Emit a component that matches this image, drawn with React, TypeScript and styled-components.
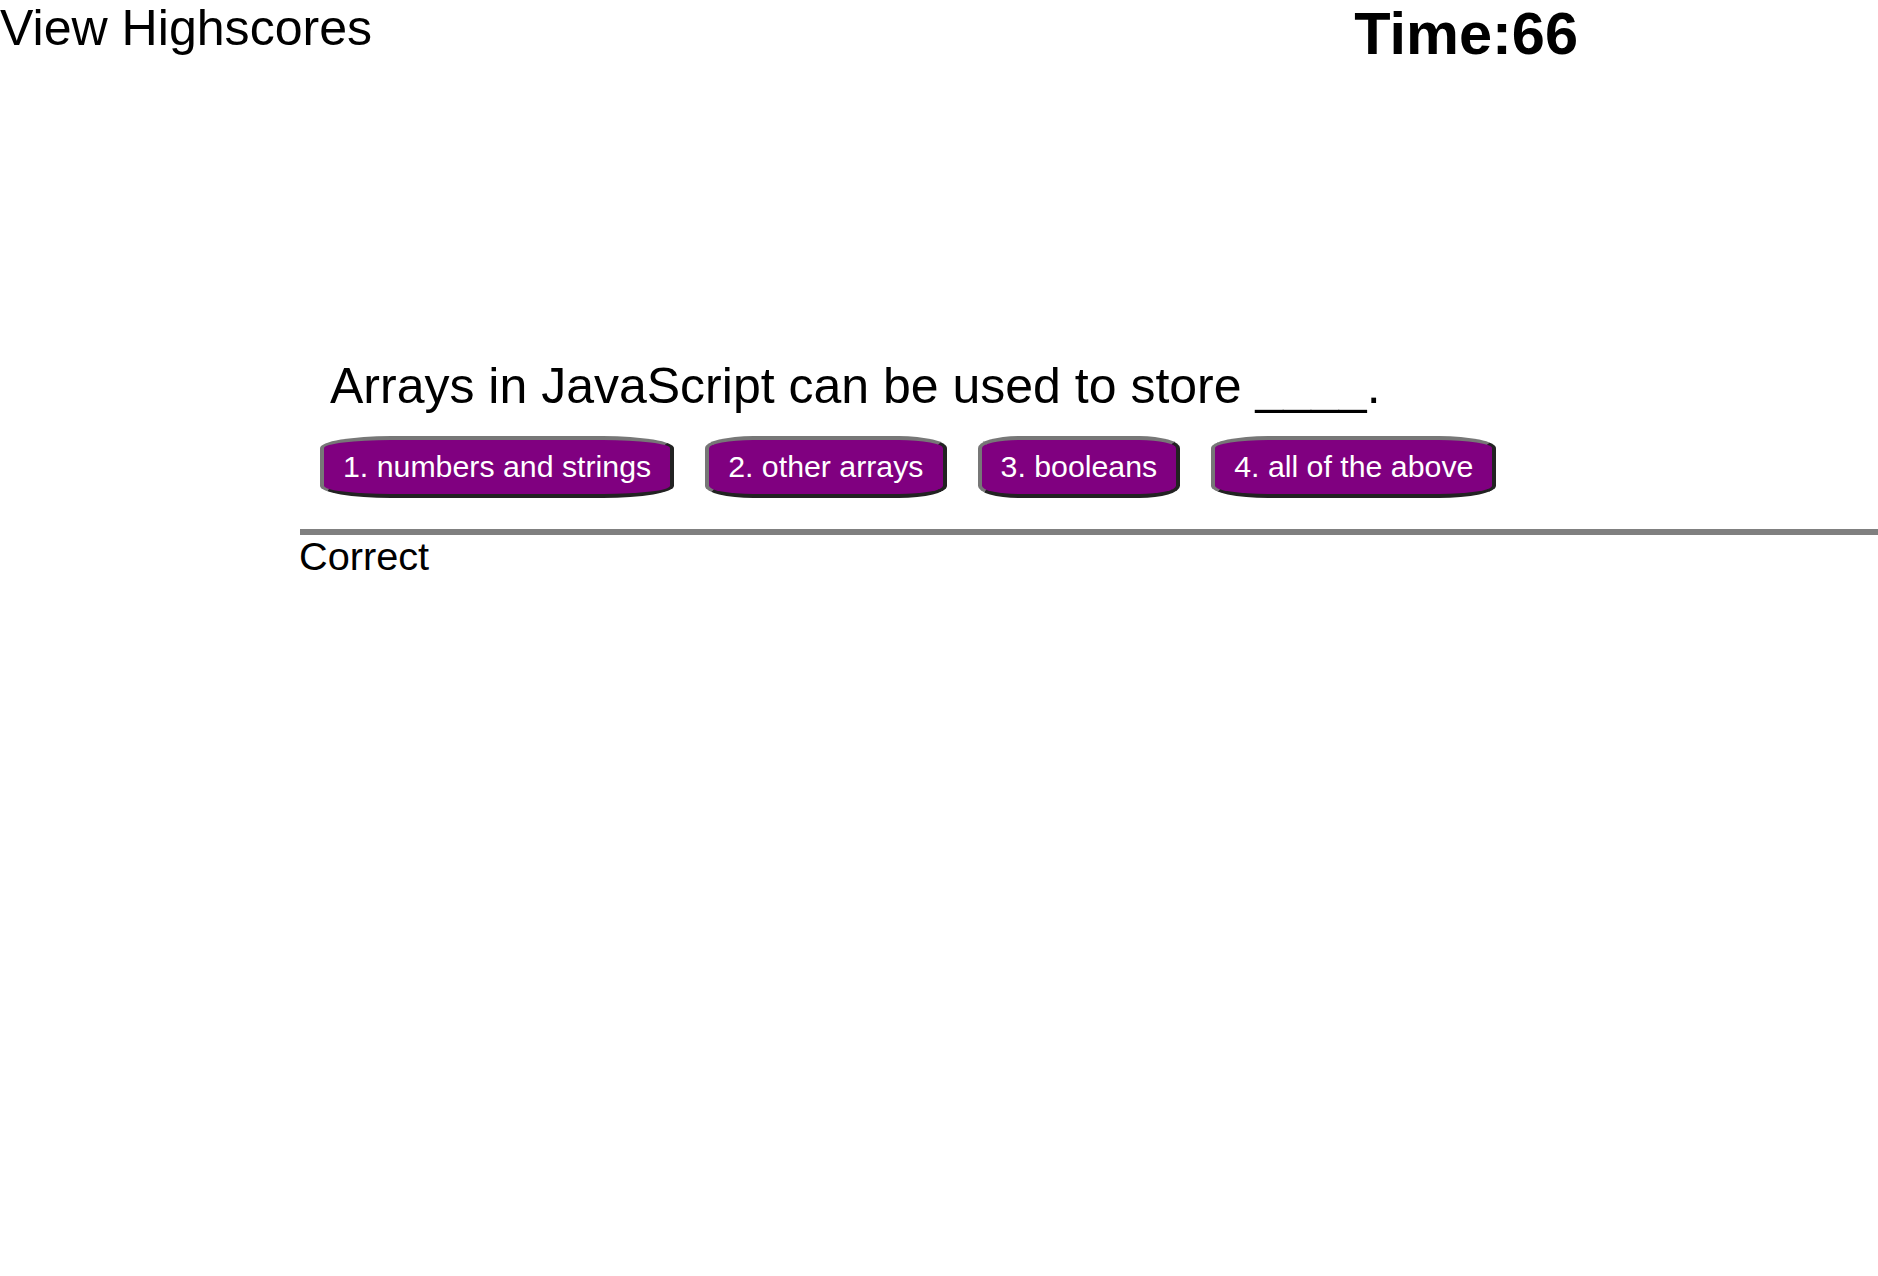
import styled, { createGlobalStyle } from 'styled-components'

const GLOBAL = createGlobalStyle`
    html, body {
        margin: 0;
        padding: 0;
        background: white;
        font-family: "Liberation Sans", Arial, Helvetica, sans-serif;
        color: black;
    }
`

const HEADER = styled.header`
    display: flex;
    justify-content: space-between;
    align-items: flex-start;
    padding-right: 300px;
`

const HIGHSCORES_LINK = styled.a`
    font-size: 50.1px;
    line-height: 1.1;
    margin-top: 1px;
    color: black;
    text-decoration: none;
    cursor: pointer;
`

const TIMER = styled.div`
    font-size: 59.5px;
    font-weight: bold;
    line-height: 1.15;
`

const QUIZ = styled.main`
    margin-top: 290px;
    padding-left: 300px;
`

const QUESTION = styled.h2`
    margin: 0 0 21px 30px;
    font-size: 50px;
    font-weight: normal;
    line-height: 1.14;
`

const CHOICES = styled.div`
    display: flex;
    gap: 31px;
    margin-left: 20px;
`

const CHOICE = styled.button`
    font-family: inherit;
    font-size: 30.3px;
    line-height: 1.13;
    color: white;
    background: #800080;
    padding: 9.5px 19px;
    border: 4px solid;
    border-color: #777777 #222222 #222222 #777777;
    border-radius: 20%;
    cursor: pointer;
`

const DIVIDER = styled.hr`
    margin: 31px 0 0 0;
    height: 6px;
    border: none;
    background: #808080;
`

const FEEDBACK = styled.div`
    font-size: 39.7px;
    line-height: 1.149;
    margin: -1px 0 0 -1px;
`

const answers = ['1. numbers and strings', '2. other arrays', '3. booleans', '4. all of the above']

const App = () => {
    return (
        <div>
            <GLOBAL />
            <HEADER>
                <HIGHSCORES_LINK>View Highscores</HIGHSCORES_LINK>
                <TIMER>Time:66</TIMER>
            </HEADER>

            <QUIZ>
                <QUESTION>Arrays in JavaScript can be used to store ____.</QUESTION>
                <CHOICES>
                    {answers.map((a) => (
                        <CHOICE key={a}>{a}</CHOICE>
                    ))}
                </CHOICES>
                <DIVIDER />
                <FEEDBACK>Correct</FEEDBACK>
            </QUIZ>
        </div>
    )
}

export default App
